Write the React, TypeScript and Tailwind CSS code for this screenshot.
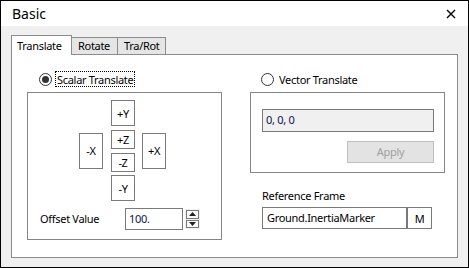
import { ReactNode } from 'react'

const font = { fontFamily: '"Noto Sans", "Segoe UI", sans-serif' }

function Radio({ checked, label, focused }: { checked?: boolean; label: string; focused?: boolean }) {
  return (
    <div className="flex h-[16px] items-center">
      <span className="flex size-[13px] items-center justify-center rounded-full border border-[#333333] bg-white">
        {checked && <span className="size-[7px] rounded-full bg-[#333333]" />}
      </span>
      <span
        className={
          'ml-[3px] flex h-[16px] items-center px-[1px] leading-none ' +
          (focused ? 'border border-dotted border-black' : 'border border-transparent')
        }
      >
        {label}
      </span>
    </div>
  )
}

function Btn({ children, className }: { children: ReactNode; className: string }) {
  return (
    <div className={'flex items-center justify-center border border-[#7a7a7a] bg-white leading-none ' + className}>
      {children}
    </div>
  )
}

export default function App() {
  return (
    <div style={font} className="flex h-[268px] w-[469px] flex-col border border-black bg-[#f0f0f0] text-[11px] tracking-[-0.3px] text-black">
      {/* title bar */}
      <div className="flex h-[25px] shrink-0 items-center justify-between bg-white pl-[11px] pr-[12px]">
        <span className="text-[14px] leading-none tracking-normal">Basic</span>
        <svg width="10" height="10" viewBox="0 0 10 10" className="mt-[1px]">
          <path d="M1 1 L9 9 M9 1 L1 9" stroke="#000" strokeWidth="1.4" />
        </svg>
      </div>

      <div className="px-[10px] pt-[9px]">
        <div className="flex items-end">
          <div className="relative z-10 -mb-px flex h-[20px] w-[61px] items-start border border-b-0 border-[#8c8c8c] bg-white pl-[5px] pt-[2px]">
            Translate
          </div>
          <div className="flex h-[17px] w-[46px] items-center border border-b-0 border-l-0 border-[#8c8c8c] bg-[#e5e5e5] pl-[6px] pt-[1px]">
            Rotate
          </div>
          <div className="flex h-[17px] w-[48px] items-center border border-b-0 border-l-0 border-[#8c8c8c] bg-[#e5e5e5] pl-[6px] pt-[1px]">
            Tra/Rot
          </div>
        </div>

        <div className="flex h-[204px] w-[447px] gap-[28px] border border-[#8c8c8c] bg-white pl-[15px] pt-[16px]">
          {/* scalar column */}
          <div className="flex w-[195px] flex-col">
            <div className="pl-[12px]">
              <Radio checked focused label="Scalar Translate" />
            </div>
            <div className="mt-[5px] flex h-[148px] flex-col border border-[#858585] pt-[7px]">
              <div className="flex items-center pl-[51px]">
                <Btn className="h-[36px] w-[24px]">-X</Btn>
                <div className="ml-[8px] flex flex-col">
                  <Btn className="h-[26px] w-[24px]">+Y</Btn>
                  <Btn className="mt-[4px] h-[19px] w-[24px]">+Z</Btn>
                  <Btn className="mt-[4px] h-[19px] w-[24px]">-Z</Btn>
                  <Btn className="mt-[3px] h-[26px] w-[24px]">-Y</Btn>
                </div>
                <Btn className="ml-[7px] h-[36px] w-[24px]">+X</Btn>
              </div>
              <div className="mt-[7px] flex items-center pl-[12px]">
                <span className="w-[85px]">Offset Value</span>
                <div className="flex h-[22px] w-[58px] items-center border border-[#7a7a7a] pl-[3px] text-[#10104a]">100.</div>
                <div className="ml-[2px] flex h-[20px] w-[15px] flex-col gap-[1px] bg-[#f0f0f0] p-[1px]">
                  <div className="flex flex-1 items-center justify-center border border-[#7a7a7a] bg-[#fafafa]">
                    <svg width="7" height="4" viewBox="0 0 7 4"><path d="M3.5 0 L7 4 L0 4 Z" fill="#222" /></svg>
                  </div>
                  <div className="flex flex-1 items-center justify-center border border-[#7a7a7a] bg-[#fafafa]">
                    <svg width="7" height="4" viewBox="0 0 7 4"><path d="M0 0 L7 0 L3.5 4 Z" fill="#222" /></svg>
                  </div>
                </div>
              </div>
            </div>
          </div>

          {/* vector column */}
          <div className="flex w-[195px] flex-col">
            <div className="pl-[11px]">
              <Radio label="Vector Translate" />
            </div>
            <div className="mt-[5px] flex h-[81px] flex-col items-start border border-[#858585] pl-[11px] pt-[16px]">
              <div className="flex h-[23px] w-[172px] items-center border border-[#7a7a7a] bg-[#f0f0f0] pl-[3px] text-[#10104a]">0, 0, 0</div>
              <div className="ml-[85px] mt-[9px] flex h-[22px] w-[87px] items-center justify-center border border-[#bfbfbf] bg-[#e3e3e3] text-[#a0a0a0]">
                Apply
              </div>
            </div>
            <div className="mt-[17px] pl-[12px] leading-none">Reference Frame</div>
            <div className="mt-[6px] flex pl-[12px]">
              <div className="flex h-[22px] w-[145px] items-center border border-[#7a7a7a] pl-[4px]">Ground.InertiaMarker</div>
              <Btn className="h-[22px] w-[25px]">M</Btn>
            </div>
          </div>
        </div>
      </div>
    </div>
  )
}
